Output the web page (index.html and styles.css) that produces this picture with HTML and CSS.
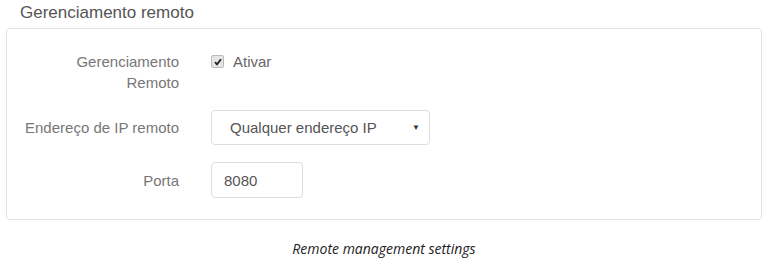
FILE: index.html
```html
<!DOCTYPE html>
<html>
<head>
  <meta charset="UTF-8">
  <title>Gerenciamento remoto</title>
  <link rel="stylesheet" href="styles.css">
</head>
<body>
  <h2 class="section-title">Gerenciamento remoto</h2>
  <div class="panel">
    <div class="form-grid">
      <label class="field-label">Gerenciamento<br>Remoto</label>
      <div class="check-field">
        <span class="check-box">
          <svg width="8" height="8" viewBox="0 0 8 8"><path d="M1 4.2 L3 6.3 L7 1.2" fill="none" stroke="#222" stroke-width="1.8"/></svg>
        </span>
        <span class="check-text">Ativar</span>
      </div>

      <label class="field-label field-label-mid">Endereço de IP remoto</label>
      <div class="select-box">
        <span>Qualquer endereço IP</span>
        <span class="select-arrow">&#9660;</span>
      </div>

      <label class="field-label field-label-mid">Porta</label>
      <div class="text-box">8080</div>
    </div>
  </div>
  <p class="caption">Remote management settings</p>
</body>
</html>
```

FILE: styles.css
```css
body {
  margin: 0;
  background-color: #fff;
  font-family: "Liberation Sans", Arial, sans-serif;
  color: #555;
}

.section-title {
  margin: 0;
  padding: 2px 0 0 20px;
  height: 26px;
  font-size: 17px;
  font-weight: normal;
  line-height: 22px;
  color: #555;
}

.panel {
  margin: 0 6px;
  height: 192px;
  box-sizing: border-box;
  border: 1px solid #e3e3e3;
  border-radius: 4px;
  padding-top: 22px;
}

.form-grid {
  display: grid;
  grid-template-columns: 172px auto;
  column-gap: 32px;
  row-gap: 17px;
  align-items: start;
}

.field-label {
  text-align: right;
  font-size: 15px;
  line-height: 21px;
  color: #777;
}

.field-label-mid {
  align-self: center;
}

.check-field {
  display: flex;
  align-items: center;
  height: 21px;
}

.check-box {
  display: flex;
  align-items: center;
  justify-content: center;
  width: 11px;
  height: 11px;
  border: 1px solid #bbb;
  background-color: #e6e6e6;
  border-radius: 2px;
  margin-right: 9px;
}

.check-text {
  font-size: 15px;
  color: #666;
}

.select-box {
  display: flex;
  align-items: center;
  justify-content: space-between;
  width: 219px;
  height: 35px;
  box-sizing: border-box;
  border: 1px solid #ddd;
  border-radius: 4px;
  padding: 0 9px 0 18px;
  font-size: 15px;
  color: #555;
}

.select-arrow {
  font-size: 8px;
  color: #333;
}

.text-box {
  display: flex;
  align-items: center;
  width: 92px;
  height: 36px;
  box-sizing: border-box;
  border: 1px solid #ddd;
  border-radius: 4px;
  padding-left: 12px;
  font-size: 15px;
  color: #555;
}

.caption {
  margin: 19px 0 0;
  text-align: center;
  font-family: "Open Sans", sans-serif;
  font-style: italic;
  font-size: 14px;
  letter-spacing: 0;
  color: #222;
}
```
